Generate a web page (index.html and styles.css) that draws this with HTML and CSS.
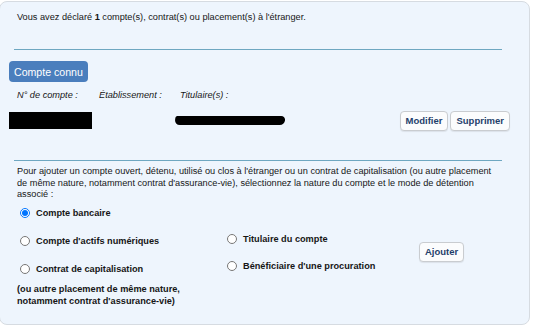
FILE: index.html
```html
<!DOCTYPE html>
<html lang="fr">
<head>
    <meta charset="UTF-8">
    <title>Comptes à l'étranger</title>
    <link rel="stylesheet" href="styles.css">
</head>
<body>
    <div class="panel">
        <p class="intro">Vous avez déclaré <b>1</b> compte(s), contrat(s) ou placement(s) à l'étranger.</p>
        <hr class="sep">

        <div class="known">
            <span class="badge">Compte connu</span>
            <div class="heads">
                <span class="h-num">N° de compte :</span>
                <span class="h-etab">Établissement :</span>
                <span class="h-tit">Titulaire(s) :</span>
            </div>
            <div class="account-row">
                <span class="mask-box"></span>
                <span class="mask-line"></span>
                <div class="actions">
                    <button class="btn">Modifier</button>
                    <button class="btn">Supprimer</button>
                </div>
            </div>
        </div>

        <hr class="sep sep-low">

        <p class="help">Pour ajouter un compte ouvert, détenu, utilisé ou clos à l'étranger ou un contrat de capitalisation (ou autre placement de même nature, notamment contrat d'assurance-vie), sélectionnez la nature du compte et le mode de détention associé :</p>

        <div class="choices">
            <div class="col col-nature">
                <label class="opt"><input type="radio" name="nature" checked>Compte bancaire</label>
                <label class="opt"><input type="radio" name="nature">Compte d'actifs numériques</label>
                <label class="opt"><input type="radio" name="nature">Contrat de capitalisation</label>
                <p class="note">(ou autre placement de même nature,<br>notamment contrat d'assurance-vie)</p>
            </div>
            <div class="col col-mode">
                <label class="opt"><input type="radio" name="mode">Titulaire du compte</label>
                <label class="opt"><input type="radio" name="mode">Bénéficiaire d'une procuration</label>
            </div>
            <div class="col col-add">
                <button class="btn">Ajouter</button>
            </div>
        </div>
    </div>
</body>
</html>
```

FILE: styles.css
```css
body {
    margin: 0;
    padding: 0;
    background-color: #ffffff;
    font-family: "Liberation Sans", Arial, sans-serif;
    color: #161616;
}

.panel {
    width: 531px;
    height: 324px;
    margin: 1px 0 0 -1px;
    box-sizing: border-box;
    background-color: #eef5fd;
    border: 1px solid #d6dbe1;
    border-radius: 8px;
    padding: 10px 0 0 0;
}

.intro {
    margin: 0 0 0 17px;
    font-size: 9.2px;
}

.sep {
    margin: 27px 0 0 14px;
    width: 488px;
    height: 0;
    border: 0;
    border-top: 1px solid #6ea7c1;
}

.known {
    padding: 11px 0 0 9px;
}

.badge {
    display: inline-block;
    background-color: #4a7ebd;
    color: #ffffff;
    font-size: 10.6px;
    line-height: 14px;
    padding: 4px 5px 3px 5px;
    border-radius: 4px;
}

.heads {
    display: flex;
    margin: 8px 0 0 8px;
    font-size: 9.2px;
    font-style: italic;
}

.h-num { width: 82px; }
.h-etab { width: 81px; }

.account-row {
    display: flex;
    align-items: center;
    margin-top: 11px;
    height: 19px;
}

.mask-box {
    width: 83px;
    height: 17px;
    background-color: #000000;
}

.mask-line {
    width: 110px;
    height: 9px;
    margin-left: 83px;
    background-color: #000000;
    border-radius: 2px 5px 5px 6px;
    transform: skewX(-8deg);
}

.actions {
    display: flex;
    gap: 2px;
    margin-left: auto;
    margin-right: 19px;
}

.btn {
    font-family: "Liberation Sans", Arial, sans-serif;
    font-size: 9.5px;
    font-weight: bold;
    color: #1f3f6b;
    background-color: #fbfcfd;
    border: 1px solid #c9ccd0;
    border-radius: 4px;
    padding: 3px 5px 4px 5px;
    box-shadow: 0 1px 1px rgba(0, 0, 0, 0.08);
}

.sep-low {
    margin-top: 30px;
}

.help {
    margin: 5px 30px 0 17px;
    font-size: 9.2px;
    line-height: 11.5px;
}

.choices {
    display: flex;
    margin-top: -2px;
}

.col {
    display: flex;
    flex-direction: column;
}

.col-nature {
    width: 207px;
    padding-left: 20px;
}

.col-mode {
    width: 192px;
    padding-top: 27px;
}

.col-add {
    padding-top: 43px;
}

.opt {
    display: flex;
    align-items: center;
    height: 28px;
    font-size: 9.2px;
    font-weight: bold;
}

.col-mode .opt {
    height: 27px;
}

.opt input {
    margin: 0 6px 0 0;
    width: 10px;
    height: 10px;
}

.note {
    margin: 0 0 0 -3px;
    font-size: 9.2px;
    font-weight: bold;
    line-height: 12px;
}
```
